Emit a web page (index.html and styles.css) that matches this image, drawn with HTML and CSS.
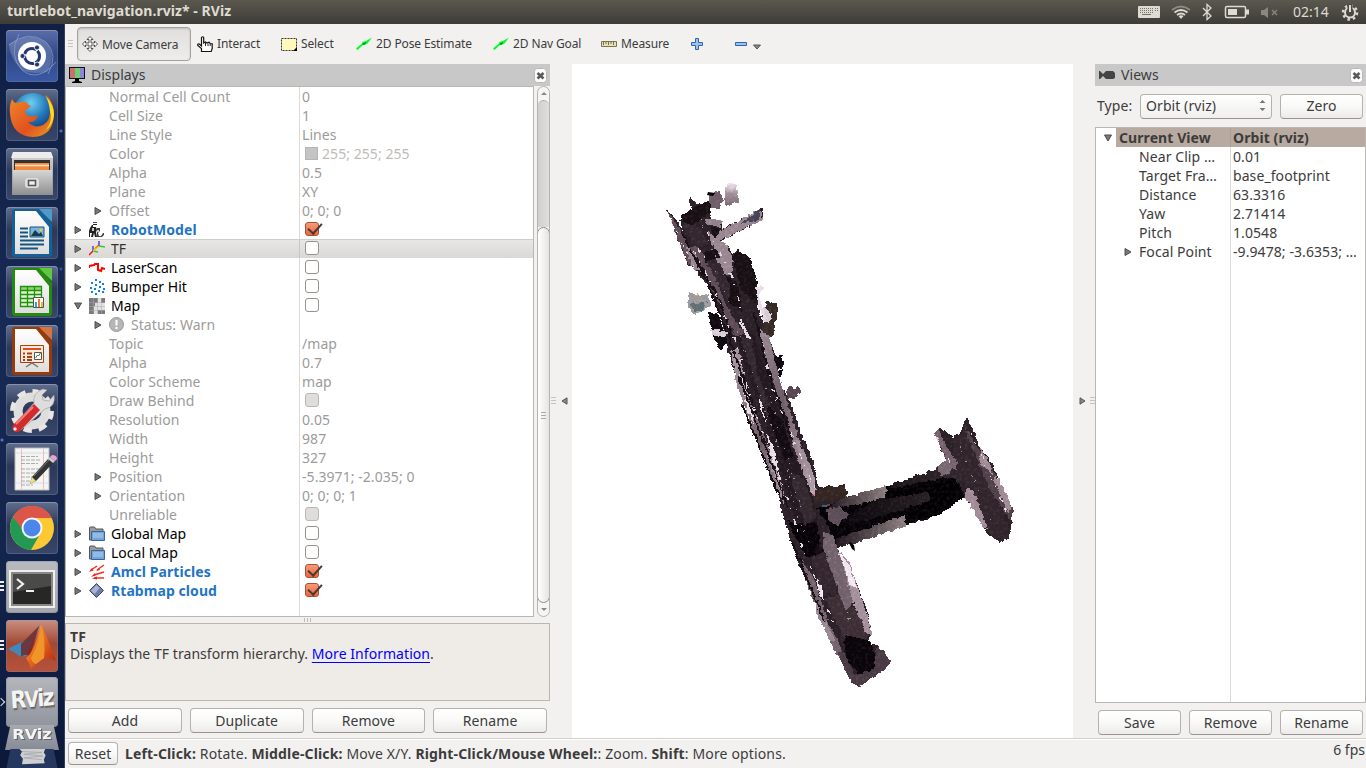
FILE: index.html
```html
<!DOCTYPE html>
<html lang="en">
<head>
<meta charset="utf-8">
<title>turtlebot_navigation.rviz* - RViz</title>
<link rel="stylesheet" href="styles.css">
</head>
<body>
<svg class="defs" width="0" height="0">
  <defs>
    <linearGradient id="sheet" x1="0" y1="0" x2="0" y2="1"><stop offset="0" stop-color="#fff"/><stop offset="1" stop-color="#ddd"/></linearGradient>
    <linearGradient id="steel" x1="0" y1="0" x2="0" y2="1"><stop offset="0" stop-color="#d6d6d6"/><stop offset="1" stop-color="#8f8f8f"/></linearGradient>
    <linearGradient id="fox" x1="0" y1="0" x2="1" y2="1"><stop offset="0" stop-color="#f08a28"/><stop offset=".6" stop-color="#e2511f"/><stop offset="1" stop-color="#e8a020"/></linearGradient>
    <radialGradient id="globe" cx=".45" cy=".25" r=".8"><stop offset="0" stop-color="#6fd0f2"/><stop offset=".5" stop-color="#2277b8"/><stop offset="1" stop-color="#0c2b66"/></radialGradient>
    <linearGradient id="flame" x1="0" y1="0" x2="1" y2="1"><stop offset="0" stop-color="#f6c048"/><stop offset=".5" stop-color="#e8641f"/><stop offset="1" stop-color="#a8200c"/></linearGradient>
    <symbol id="right" viewBox="0 0 8 8"><path d="M1 .5 7 4 1 7.5z" fill="#777" stroke="#4c4c4c"/></symbol>
    <symbol id="down" viewBox="0 0 8 8"><path d="M.5 1h7L4 7z" fill="#777" stroke="#4c4c4c"/></symbol>
    <symbol id="folder" viewBox="0 0 16 16"><path d="M.5 14V2q0-1 1-1h4l1.500 2h7v11z" fill="#9a9a9a" stroke="#555"/><path d="M2.500 5.500h13v9h-13z" fill="#76a4d6" stroke="#3465a4"/><path d="M4 7h10v5H4z" fill="#93bae3"/></symbol>
    <symbol id="arrow" viewBox="0 0 16 16"><path d="M0 12.500 6.500 7 6 6l4-1 6-3.500-4.500 6-3 1.500-1-.5L1.500 14z" fill="#0f2"/><path d="m6 8 4-2v1L8 9z" fill="#083"/></symbol>
    <symbol id="grip" viewBox="0 0 5 8"><path d="M0 .5h5M0 3.500h5M0 6.500h5" stroke="#c5c3c0"/></symbol>
    <symbol id="close" viewBox="0 0 13 15"><rect x=".5" y=".5" width="12" height="14" rx="3" fill="#fcfcfc" stroke="#b8b8b8"/><path d="m3.500 5 6 5.500m0-5.500-6 5.500" stroke="#5a5a57" stroke-width="2.700"/></symbol>
  </defs>
</svg>

<header class="topbar">
  <h1 class="title">turtlebot_navigation.rviz* - RViz</h1>
  <svg class="indicators" width="232" height="24" viewBox="1134 0 232 24">
    <rect x="1138" y="6" width="22" height="12" rx="1" fill="#dfdbd2"/>
    <path d="M1140 8.500h13M1140 10.500h13M1140 12.500h13M1155 8.500h4M1155 10.500h4" stroke="#77736a" stroke-dasharray="1 1"/><path d="M1142 14.500h9" stroke="#77736a"/>
    <g fill="none" stroke-width="1.800"><path d="M1172 10q9-7 18 0" stroke="#8e8a80"/><path d="M1174.500 12.500q6.500-5 13 0M1177 15q4-3 8 0" stroke="#dfdbd2"/></g><path d="m1178.500 16 2.500 3 2.500-3q-2.500-1.500-5 0z" fill="#dfdbd2"/>
    <path d="m1203 8 8 8-4 3.500v-15l4 3.500-8 8" fill="none" stroke="#dfdbd2" stroke-width="1.300"/>
    <rect x="1225.500" y="6.500" width="20" height="11" rx="1.500" fill="none" stroke="#dfdbd2" stroke-width="1.500"/><path d="M1228 9h9v6h-9zM1246 9.500h3v5h-3z" fill="#dfdbd2"/>
    <path d="M1261 10h3l4-3v11l-4-3h-3z" fill="#8b877e"/><path d="m1272 10 5 5m0-5-5 5" stroke="#8b877e" stroke-width="1.400"/>
    <g fill="none" stroke="#dfdbd2"><circle cx="1350" cy="12.500" r="5" stroke-width="2"/><circle cx="1350" cy="12.500" r="7" stroke-width="2.500" stroke-dasharray="2.500 3"/></g><path d="M1347.500 4h5v8h-5z" fill="#4b4942"/><path d="M1350 5v7" stroke="#dfdbd2" stroke-width="2"/>
  </svg>
  <span class="clock">02:14</span>
</header>

<div class="desktop">
<nav class="launcher">
  <div class="tile dash"><svg viewBox="0 0 52 52"><g fill="none" stroke="#8f9fce" stroke-opacity=".7"><path d="M3 15Q22-1 40 12q13 13 2 32"/><path d="M13 4Q2 25 16 40q16 13 34-8"/></g><path d="M3 14Q25 0 42 14 50 28 41 42 20 45 14 38 4 28 3 14z" fill="#9aa9d5" fill-opacity=".35"/><circle cx="26" cy="26" r="14" fill="#fff"/><circle cx="26" cy="26" r="7.500" fill="none" stroke="#24386f" stroke-width="3" stroke-dasharray="14.200 1.500" stroke-dashoffset="6"/><g fill="#24386f" stroke="#fff" stroke-width=".8"><circle cx="16.500" cy="26" r="2.500"/><circle cx="31" cy="17.500" r="2.500"/><circle cx="31" cy="34.500" r="2.500"/></g></svg></div>
  <div class="tile"><svg viewBox="0 0 52 52"><circle cx="27" cy="24" r="20" fill="url(#globe)"/><path d="M6 10q1 3 4 4 5-2 10-1 2 3 5 4l-6 5q0 3 4 5 5 1 9-1-2 8-10 7 7 7 15 3 8-4 7-17-1-9-4-14 8 9 8 19Q48 47 27 48 6 47 4 25q-1-8 2-15z" fill="url(#fox)"/><path d="M39 6q9 9 9 20-1 10-8 15 7-9 4-19-1-9-5-16z" fill="#ffd91f"/></svg></div>
  <div class="tile"><svg viewBox="0 0 52 52"><path d="M7 4h38l2 5v38H6V9z" fill="url(#steel)"/><path d="M7 4h38l2 6H5z" fill="#ececea"/><path d="M8 12h36v12H8z" fill="#333"/><path d="M9 15h34v9H9z" fill="#f08a3c"/><path d="M9 17.500h34" stroke="#fde3ca" stroke-width="1.500"/><path d="M7 22h39v25H7z" fill="url(#steel)"/><rect x="19" y="30" width="14" height="10" rx="3" fill="#ddd"/><path d="M22.500 32.500h7v5h-7z" fill="#eee" stroke="#555" stroke-width="1.500"/></svg></div>
  <div class="tile"><svg viewBox="0 0 52 52"><path d="M9 2h25l12 15v30q0 3-3 3H9q-3 0-3-3V5q0-3 3-3z" fill="#156094"/><path d="M9 4h21l13 16v27H9z" fill="url(#sheet)"/><path d="M33 2h13v13z" fill="#4a9ccf"/><g stroke="#145680" stroke-width="2"><path d="M14 21.500h8M14 25.500h8M14 29.500h8M14 33.500h24M14 37.500h24M14 41.500h18"/></g><path d="M24 20h14v10H24z" fill="#7cb5dc" stroke="#145680"/><path d="m25 29 4-6 4 4 2-2 2 4z" fill="#173b4b"/><circle cx="35" cy="23" r="1.500" fill="#f0c53a"/></svg></div>
  <div class="tile"><svg viewBox="0 0 52 52"><path d="M9 2h25l12 15v30q0 3-3 3H9q-3 0-3-3V5q0-3 3-3z" fill="#238a0d"/><path d="M9 4h21l13 16v27H9z" fill="url(#sheet)"/><path d="M33 2h13v13z" fill="#5ec83e"/><path d="M14.500 20.500h21v20h-21z" fill="#dcf6d1"/><path d="M14 20h22v4H14z" fill="#8bd770"/><path d="M14.500 20.500h21v20h-21zm0 4h21m-21 4h21m-21 4h21m-21 4h21m-14-16v20m7-20v20" fill="none" stroke="#25900d" stroke-width="1.300"/><path d="M27.500 31.500h10v10h-10z" fill="#fff" stroke="#555"/><path d="M29 36h2v5h-2z" fill="#28a6e8"/><path d="M32 33h2v8h-2z" fill="#f37b27"/><path d="M35 36h2v5h-2z" fill="#e5bd2c"/></svg></div>
  <div class="tile"><svg viewBox="0 0 52 52"><path d="M9 2h25l12 15v30q0 3-3 3H9q-3 0-3-3V5q0-3 3-3z" fill="#993a08"/><path d="M9 4h21l13 16v27H9z" fill="url(#sheet)"/><path d="M33 2h13v13z" fill="#d47440"/><path d="M14.500 20.500h23v17h-23z" fill="#fce8dd" stroke="#a4420d"/><path d="M17 24h18" stroke="#d6541a" stroke-width="2"/><path d="M17 28.500h2m2 0h5m-9 3.500h2m2 0h5m-9 3h2m2 0h5" stroke="#a4420d" stroke-width="2"/><path d="M28.500 27.500h7v7h-7z" fill="#fff" stroke="#555"/><path d="m29.500 33 2-3 1 1 2-3" stroke="#28912b" fill="none"/><path d="m20 42 6-4 6 4" fill="none" stroke="#777" stroke-width="1.500"/></svg></div>
  <div class="tile"><svg viewBox="0 0 52 52"><circle cx="26" cy="27" r="14" fill="none" stroke="#dededc" stroke-width="9"/><circle cx="26" cy="27" r="19.500" fill="none" stroke="#e6e6e4" stroke-width="5" stroke-dasharray="8.300 7"/><path d="M8 41 28 19q-2-10 9-14l4 1-5 5 1 5 6 1 5-6q2 12-9 14L15 46z" fill="#ddd" stroke="#999" stroke-width=".6"/><path d="M7 41 28 20l6 6-19 20q-4 4-7 1-3-3-1-6z" fill="#d22b2b"/><path d="m10 40 17-17" stroke="#f28181" stroke-width="2"/><circle cx="9" cy="45" r="1.700" fill="#eee"/></svg></div>
  <div class="tile"><svg viewBox="0 0 52 52"><path d="M9 5h34v42H9z" fill="#f4f4f2" stroke="#bbb"/><path d="M10 10h32M10 40h32" stroke="#cfe0f2"/><path d="M15.500 6v40M37.500 6v40" stroke="#f1bcbc"/><path d="M15 13.500h17M15 17h20M15 20.500h17M15 26h20M15 30h17M15 34h14M15 38h15M15 42h12" stroke="#999" stroke-width=".8" stroke-dasharray="4 1"/><path d="m24 41 2-7 16-18 5 4-17 18z" fill="#333"/><path d="m28 33 16-17" stroke="#777"/><path d="m24 41 2-7 4 4z" fill="#f3dd7a"/><path d="m42 16 2-2 5 4-2 2z" fill="#ccc"/><path d="m44 14 2-2q5 0 5 4l-2 2z" fill="#eaa0d0"/></svg></div>
  <div class="tile"><svg viewBox="0 0 52 52"><circle cx="26" cy="26" r="22" fill="#fcc934"/><path d="M7 15A22 22 0 0 1 46 16H26L17 30z" fill="#dc5549"/><path d="M7 15A22 22 0 0 0 25 48l9-16q-9 5-15-2z" fill="#249954"/><circle cx="26" cy="26" r="10.500" fill="#f5f5f5"/><circle cx="26" cy="26" r="8.500" fill="#4a86ec"/></svg></div>
  <div class="tile silver marked"><svg viewBox="0 0 52 52"><path d="M4 10h44v36H4z" fill="#888" stroke="#efefed" stroke-width="2"/><path d="M7 13h38v30H7z" fill="#272725"/><path d="M7 13h38v12L7 31z" fill="#4a4a48"/><path d="m11 18 6 5-6 5M20 30h8" fill="none" stroke="#f2f2f2" stroke-width="2.200"/></svg></div>
  <div class="tile matlab marked"><svg viewBox="0 0 52 52"><path d="M2 29q9-5 14-7 8-3 18-18L20 36l-5 1q-4-3-13-8z" fill="#3f87bc"/><path d="M15 24 33 6 24 36q-5-3-9 1z" fill="#7a1e18" fill-opacity=".75"/><path d="M35 4q8 17 15 37-7-5-12-2-8 4-13 10-2-7-5-11 8-5 15-34z" fill="url(#flame)"/><path d="M35 5q5 14 3 33l-8 6q-4-1-5-6 9-16 10-33z" fill="#f0952a"/></svg></div>
  <div class="tile silver rviz"><b class="logo">R<i>V</i>iz</b></div>
  <div class="fold"><b class="foldlogo">RViz</b></div>
  <div class="fold last"><svg viewBox="0 0 52 22"><path d="m12 2 29-1-2 5 2 3-2 5 1 4-25 1 1-6-3-4 2-4z" fill="#cfcfcf"/><path d="m15 5 22 1-20 2 21 2-21 2 20 2" fill="none" stroke="#a8abb3"/></svg></div>
</nav>

<main class="app">
  <div class="toolbar">
    <svg class="toolgrip" width="5" height="8"><use href="#grip"/></svg>
    <div class="tool active"><svg width="16" height="16" viewBox="0 0 16 16"><path d="m8 .5 3 3H9V7h3.500V5l3 3-3 3V9H9v3.500h2l-3 3-3-3h2V9H3.500v2l-3-3 3-3v2H7V3.500H5z" fill="#fff" stroke="#444" stroke-width=".9"/></svg><span>Move Camera</span></div>
    <div class="tool t1"><svg width="16" height="16" viewBox="0 0 16 16"><path d="M4.500 15.500v-3L.8 9.500q-.5-2 1.500-1.500L4.500 10V1.500q1.200-1.500 2.200 0V7l1.800-1 1.500 1 2-.7 1.200 1.200 2 .3v4.700l-1 3z" fill="#fff" stroke="#111" stroke-width="1.200"/><path d="M8.500 7v3M11 7.500V10M13.200 8v2" stroke="#222"/></svg><span>Interact</span></div>
    <div class="tool t2"><svg width="16" height="16" viewBox="0 0 16 16"><path d="M.5 2.500h15v12H.5z" fill="#fff8bd" stroke="#333" stroke-dasharray="2 1"/><path d="M16 11v4h-4z"/></svg><span>Select</span></div>
    <div class="tool t3"><svg width="16" height="16"><use href="#arrow"/></svg><span>2D Pose Estimate</span></div>
    <div class="tool t4"><svg width="16" height="16"><use href="#arrow"/></svg><span>2D Nav Goal</span></div>
    <div class="tool t5"><svg width="16" height="16" viewBox="0 0 16 16"><path d="M.5 5.500h15v5H.5z" fill="#ece1ae" stroke="#77705a"/><path d="M2.500 6v3M5 6v2M7.500 6v3M10 6v2M12.500 6v3" stroke="#77705a"/></svg><span>Measure</span></div>
    <svg class="plus" width="12" height="12" viewBox="0 0 12 12"><path d="M4.500.5h3v4h4v3h-4v4h-3v-4h-4v-3h4z" fill="#9fc2e8" stroke="#2f66a8"/></svg>
    <svg width="12" height="12" viewBox="0 0 12 12"><path d="M.5 4.500h11v3H.5z" fill="#9fc2e8" stroke="#2f66a8"/></svg>
    <svg class="menuarrow" width="8" height="6"><path d="M.5 1h7L4 5z" fill="#888" stroke="#555"/></svg>
  </div>

  <div class="work">
    <section class="displays">
      <h2 class="dockhead"><svg width="16" height="16" viewBox="0 0 16 16"><path d="M0 0h16v12H0z" fill="#111"/><path d="M1 1h5v10H1z" fill="#c77172"/><path d="M6 1h5v10H6z" fill="#6dcf72"/><path d="M11 1h4v10h-4z" fill="#8c86da"/><path d="M6 12h4v2l3 1v1H3v-1l3-1z"/></svg><span>Displays</span><svg class="x" width="13" height="15"><use href="#close"/></svg></h2>
      <div class="treewrap">
        <div class="tree">
          <div class="row sub"><span class="name">Normal Cell Count</span><span>0</span></div>
          <div class="row sub"><span class="name">Cell Size</span><span>1</span></div>
          <div class="row sub"><span class="name">Line Style</span><span>Lines</span></div>
          <div class="row sub"><span class="name">Color</span><span class="rgb"><i></i>255; 255; 255</span></div>
          <div class="row sub"><span class="name">Alpha</span><span>0.5</span></div>
          <div class="row sub"><span class="name">Plane</span><span>XY</span></div>
          <div class="row sub open"><span class="name"><svg width="8" height="8"><use href="#right"/></svg>Offset</span><span>0; 0; 0</span></div>
          <div class="row on"><span class="name"><svg width="8" height="8"><use href="#right"/></svg><svg class="ico" width="16" height="16" viewBox="0 0 16 16"><path d="M4 0h4v1H4z" fill="#33498c"/><path d="M4 2h4v1H4zM1 6l2-3h1v2h3l1 3-1 2 1 5H6l-1-4-1 4H2l1-4H1v4H0V9z" fill="#222"/><path d="M8 6h3v3l-2 2 1 3h2l2-3h1v2l-2 2H8z" fill="#444"/><path d="M3 6h2v3H3zM8 8h2v2H8z" fill="#ccc"/></svg><b>RobotModel</b></span><i class="check yes"></i></div>
          <div class="row sel"><span class="name"><svg width="8" height="8"><use href="#right"/></svg><svg class="ico" width="16" height="16" viewBox="0 0 16 16"><g fill="none" stroke-width="1.400"><path d="m0 14 4-4M6 8l4-4" stroke="#e11"/><path d="M4 10V5M10 5V0" stroke="#53c"/><path d="m4 10 5 1M10 5l6 1" stroke="#3c2"/><path d="m4 10 6-5" stroke="#ec0"/></g></svg>TF</span><i class="check"></i></div>
          <div class="row"><span class="name"><svg width="8" height="8"><use href="#right"/></svg><svg class="ico" width="16" height="16" viewBox="0 0 16 16"><path d="M0 8V6l5-1 1-1h3v6l3 1 1-3 3 1" fill="none" stroke="red" stroke-width="2"/></svg>LaserScan</span><i class="check"></i></div>
          <div class="row"><span class="name"><svg width="8" height="8"><use href="#right"/></svg><svg class="ico" width="16" height="16" viewBox="0 0 16 16"><path d="M6 0h2v2H6zM2 3h2v2H2zM10 2h2v2h-2zM13 4h2v2h-2zM6 5h2v2H6zM1 8h2v2H1zM10 7h2v2h-2zM14 9h2v2h-2zM5 9h2v2H5zM2 12h2v2H2zM9 11h2v2H9zM13 12h2v2h-2zM6 14h2v2H6z" fill="#0a82f0"/></svg>Bumper Hit</span><i class="check"></i></div>
          <div class="row"><span class="name"><svg width="8" height="8"><use href="#down"/></svg><svg class="ico" width="16" height="16" viewBox="0 0 16 16"><path d="M0 0h16v16H0z" fill="#e2e2e2"/><path d="M0 0h9v5H6v3H5v8H0zM12 0h4v5h-4zM9 12h7v4H9z" fill="#7b7b7b"/><path d="M4.500 0v16M8.500 0v16M12.500 0v16M0 4.500h16M0 8.500h16M0 12.500h16" stroke="#aaa" stroke-width=".5"/></svg>Map</span><i class="check"></i></div>
          <div class="row sub open"><span class="name"><svg width="8" height="8"><use href="#right"/></svg><svg class="warn" width="16" height="16" viewBox="0 0 16 16"><circle cx="7.500" cy="7.500" r="7" fill="#b6b6b6" stroke="#999"/><path d="M6.500 3h2v5.500h-2zM6.500 10h2v2h-2z" fill="#fff"/></svg>Status: Warn</span></div>
          <div class="row sub"><span class="name">Topic</span><span>/map</span></div>
          <div class="row sub"><span class="name">Alpha</span><span>0.7</span></div>
          <div class="row sub"><span class="name">Color Scheme</span><span>map</span></div>
          <div class="row sub"><span class="name">Draw Behind</span><i class="check off"></i></div>
          <div class="row sub"><span class="name">Resolution</span><span>0.05</span></div>
          <div class="row sub"><span class="name">Width</span><span>987</span></div>
          <div class="row sub"><span class="name">Height</span><span>327</span></div>
          <div class="row sub open"><span class="name"><svg width="8" height="8"><use href="#right"/></svg>Position</span><span>-5.3971; -2.035; 0</span></div>
          <div class="row sub open"><span class="name"><svg width="8" height="8"><use href="#right"/></svg>Orientation</span><span>0; 0; 0; 1</span></div>
          <div class="row sub"><span class="name">Unreliable</span><i class="check off"></i></div>
          <div class="row"><span class="name"><svg width="8" height="8"><use href="#right"/></svg><svg class="ico" width="16" height="16"><use href="#folder"/></svg>Global Map</span><i class="check"></i></div>
          <div class="row"><span class="name"><svg width="8" height="8"><use href="#right"/></svg><svg class="ico" width="16" height="16"><use href="#folder"/></svg>Local Map</span><i class="check"></i></div>
          <div class="row on"><span class="name"><svg width="8" height="8"><use href="#right"/></svg><svg class="ico" width="16" height="16" viewBox="0 0 16 16"><path d="m2 6 6-4M8 6l7-5M5 11l10-3M5 14h10" stroke="#f03020" stroke-width="1.400"/><path d="m0 8 3-4 1.500 2.500zM7 7l3-3 1 2zM2 13l4-4 .5 2.500zM3 14.500l5-2v3z" fill="#e22"/></svg><b>Amcl Particles</b></span><i class="check yes"></i></div>
          <div class="row on"><span class="name"><svg width="8" height="8"><use href="#right"/></svg><svg class="ico" width="16" height="16" viewBox="0 0 16 16"><path d="m7.500.5 7 7-7 7-7-7z" fill="#6d7dab" stroke="#3c486c"/><path d="m7.500 2 3 3-5 6L2 7.500z" fill="#a9b4d2"/></svg><b>Rtabmap cloud</b></span><i class="check yes"></i></div>
        </div>
        <div class="scroll"><i class="cap up"></i><i class="trough"></i><i class="thumb"></i><i class="cap dn"></i></div>
      </div>
      <svg class="hgrip" width="8" height="6"><path d="M.5 1v4M3.500 1v4M6.500 1v4" stroke="#bbb"/></svg>
      <div class="help"><b>TF</b><p>Displays the TF transform hierarchy. <a>More Information</a>.</p></div>
      <div class="buttons"><span class="btn">Add</span><span class="btn">Duplicate</span><span class="btn">Remove</span><span class="btn">Rename</span></div>
    </section>

    <div class="split"><svg width="5" height="8"><use href="#grip"/></svg><svg width="7" height="8"><path d="M6 .8v6.400L1 4z" fill="#888" stroke="#555"/></svg></div>

    <svg class="cloud" width="501" height="674" viewBox="572 64 501 674">
      <defs>
        <filter id="scan" x="572" y="64" width="501" height="674" filterUnits="userSpaceOnUse" color-interpolation-filters="sRGB">
          <feTurbulence type="fractalNoise" baseFrequency=".22" numOctaves="2" seed="4" result="n"/>
          <feDisplacementMap in="SourceGraphic" in2="n" scale="5" xChannelSelector="R" yChannelSelector="G" result="d"/>
          <feTurbulence type="fractalNoise" baseFrequency=".32" numOctaves="2" seed="9" result="g"/>
          <feColorMatrix in="g" values=".3 0 0 0 -.14 .28 0 0 0 -.14 .29 0 0 0 -.13 0 0 0 0 1" result="gg"/>
          <feComposite in="d" in2="gg" operator="arithmetic" k2="1" k3=".7" result="m"/>
          <feComposite in="m" in2="d" operator="in"/>
        </filter>
        <linearGradient id="wall" x1="0" y1="0" x2="1" y2="1"><stop offset="0" stop-color="#b5a3ad"/><stop offset=".5" stop-color="#6b5c63"/><stop offset="1" stop-color="#b9a6b1"/></linearGradient>
        <linearGradient id="glow" x1="0" x2="1"><stop offset="0" stop-color="#1c1518"/><stop offset="1" stop-color="#8b7f7f"/></linearGradient>
        <linearGradient id="arm" x1="0" x2="1"><stop offset="0" stop-color="#0a070a"/><stop offset="1" stop-color="#302729"/></linearGradient>
        <linearGradient id="fin" x1="0" y1="0" x2="0" y2="1"><stop offset="0" stop-color="#f0e4ee"/><stop offset=".5" stop-color="#9b8a93"/><stop offset="1" stop-color="#76656c"/></linearGradient>
      </defs>
      <g filter="url(#scan)" shape-rendering="crispEdges">
        <path fill="#2a2025" d="M667 210 675 218 683 232 680 220 693 212 688 199 691 197 697 204 710 201 710 219 722 221 722 230 763 207 763 220 717 243 727 245 732 253 738 250 750 258 758 283 758 310 767 333 777 358 780 385 790 400 800 430 815 467 818 487 846 485 847 497 887 487 933 470 947 462 934 433 940 427 953 437 960 432 967 417 980 447 990 460 1013 510 1010 537 1000 543 987 533 965 497 958 495 947 507 933 517 905 525 837 548 853 573 867 610 872 633 867 642 877 645 888 657 890 663 873 678 858 687 850 680 837 653 820 613 800 567 787 530 780 503 767 463 750 420 740 393 728 350 720 313 710 290 695 270 687 263 676 234z"/>
        <path fill="#5d4c54" d="m667 210 7 9 21 39 2 12-10-8zM688 248l9-2 18 25 11 35 23 35 18 58-8-4-20-52-31-61z"/>
        <path fill="#98868f" d="m686 247 9 5 7 19-8 0zM708 231l8 8 10 5 7 15-2 17-9-3zM714 235l47-27 2 12-50 24z"/>
        <path fill="url(#fin)" d="m725 189 4-6 8 2 2 17-14 5z"/>
        <path fill="#454457" d="m742 223 19-15-2 12-20 4z"/>
        <path fill="#918189" d="m704 219 18 1-1 8-13-4z"/><path fill="#6d5d66" d="m709 195 10-4 4 9-4 9-10-2z"/>
        <path fill="#171012" d="m695 206 15-5 1 11-17 12 5 24-14-18-4-14 10-6zM710 227l11 1-6 11zM704 254l12-6 4 8-15 7zM738 250l12 8 8 25-1 20-15-12-10-33zM725 275l13 8 4 28-14-9z"/>
        <path fill="#33272d" d="m683 222 17 6 8 16-11 4-14-20zM706 262l14 2 10 22-2 16z"/>
        <path fill="#342a25" d="m767 301 11 3-1 15-8 6-8-9zM762 323l12-1 1 14-13 1z"/><path fill="#0f0b0e" d="m708 311 11 5 8 25-5 9-7-7-5-20zM771 358l11-2 1 12-11-1zM766 371l17-2-1 7-15 5z"/>
        <path fill="#9a9a9d" d="m688 292 12 4 9-3 1 14-15 8-7-9z"/>
        <path fill="#61706f" d="m690 304 15-2-1 8-9 3z"/>
        <path fill="#d5cbd3" d="m763 307 9 6-3 10-7-3zM711 330l16 1-4 7-10-3z"/>
        <path fill="url(#wall)" d="m731 350 7-3 10 47 19 49 15 49 2 12-12-24-18-48-18-50zM757 327l12 9 12 48 18 54 16 40 1 19-8-7-27-83z"/>
        <path fill="#23191e" d="m735 336 19-2 12 36 24 75 22 47 8 46-20-4-19-62-22-66z"/>
        <path fill="#33282d" d="m741 338 11-1 6 38 17 42-8-2-11-28zM790 473l14 5 12 39-11 9z"/>
        <path fill="#120c10" d="m766 404 17 17 10 36-8 3-11-25z"/>
        <path fill="#e6dce4" d="m739 370 6 18 5 15 4 22-7-17zM766 432l7 13 7 30-7-12zM762 286l2 2-5 8 9 27-8-11-5-25zM740 319l9 14 1 7-7-9-4-10zM758 397l3 4 5 20-4-7z"/>
        <path fill="#a08f98" d="M770 452l12 34 4 14-9-14-10-31zM798 440l9 18 6 21-7-9-12-30z"/>
        <path fill="#57464f" d="m787 389 5-5 1 4 6-1 2 6-7 6-7-1z"/>
        <path fill="#33251f" d="m815 490 31-6v13l-32 7z"/>
        <path fill="#050305" d="m817 508 70-19 47-14 22 4 9 16-23 19-39 11-68 20-7-19z"/>
        <path fill="url(#glow)" d="m841 499 45-13 1 11-34 9-26 3z"/>
        <path fill="url(#arm)" d="m842 521 35-22 41-9 22 3-8 14-34 4-48 14zM890 485l44-15 6 3 14 3-69 14z"/>
        <path fill="#020102" d="m886 486 5 0-2 7 26-5 42-9 3 12-14 16-14 8-27 8v-14l25-8-2-9-43 7z"/>
        <path fill="url(#glow)" d="m836 538 38-12 31-11v12l-70 22z"/>
        <path fill="#5c4e56" d="m827 509 13-2 9 8-12 10-8-4z"/><path fill="#78686f" d="m936 467 11-7 9 1-1 11-14 4z"/>
        <path fill="#31252a" d="m953 437 13-4 19 33 21 56 4 14-10 6-12-10-16-44-25-12 9-12z"/>
        <path fill="#746169" d="m934 433 5-4 8 18 11 16-3 8-8-10z"/><path fill="#4f4146" d="m965 426 13 23 12 16 23 44-2 13-20-31-24-55z"/>
        <path fill="#9f8a94" d="m966 489 7 1 15 39-5-1-17-30zM980 447l10 16 2 13-12-14zM996 475l13 23 2 11-3 3-14-31z"/>
        <path fill="#060206" d="m787 520 18 5 12-4 4 34-15 2z"/><path fill="#140d12" d="m817 545 15 10 3 40-12-13-8-22z"/>
        <path fill="#33262c" d="m811 558 16-8 12 18-4 27-14-1z"/><path fill="#3c2e33" d="m824 597 19-1 17 20 9 23-24 1z"/>
        <path fill="#71626a" d="m801 559 14 21 4 15 11 31 14 28-1 7-7-6-17-40-11-27zM823 532l9 2 14 38 8 29-9 9-20-57z"/>
        <path fill="#a28f99" d="m838 550 12 13 18 54 4 18-5-1-15-34-6-24z"/><path fill="#efe5ee" d="m839 552 11 14 7 22-7-3zM815 576l7 12 3 12-5-4z"/><path fill="#978791" d="m815 598 6 12 14 30-5 1-14-28z"/>
        <path fill="#0a0509" d="m846 635 24 6 10 28-19 6-13-12-4-18z"/>
        <path fill="#483a43" d="m837 652 7-1 10 24 19-5 4-24 12 11 1 8-16 12-15 10-9-6z"/>
        <path fill="none" stroke="#150f12" stroke-width="2" d="m682 233 27 53 21 55 26 74M739 377l30 79 19 52M754 313l16 66 22 61M791 540l34 82M697 258l24 46 11 34M775 391l14 35M742 404l36 90"/>
        <path fill="none" stroke="#e3d7df" stroke-width="1.300" stroke-dasharray="5 6 2 11" d="m671 221 22 44M694 250l18 35 24 57 18 68 34 90 14 46 34 84M707 232l22 35 12 41M762 341l10 48 24 57 19 42M936 438l15 26M971 432l36 81M697 249l8 5-3 10"/>
        <path fill="none" stroke="#9c8993" stroke-dasharray="1 5 1 9" d="m744 350 34 95 29 79M960 446l36 87M828 551l24 76M700 220l18 42M765 381l31 104M785 480l20 57 16 25M716 270l30 82"/>
      </g>
      <path d="m708 192 7 1-2 3-6-1zM850 542l4 3 1 6-3-2-3-6z"/>
      <path d="M822 506h5" stroke="#4db7dc"/><path d="M812 495h3M827 505h3" stroke="#d65863"/><path d="m692 293 4 4m1-4 5 7" stroke="#c29b65"/><path d="m700 308 4 1m2-8 2 2" stroke="#3f779b"/>
    </svg>

    <div class="split right"><svg width="7" height="8"><path d="M1 .8v6.400L6 4z" fill="#888" stroke="#555"/></svg><svg width="5" height="8"><use href="#grip"/></svg></div>

    <section class="views">
      <h2 class="dockhead"><svg width="16" height="16" viewBox="0 0 16 16"><path d="M0 4h1l3 3 3-3h7l2 2v5l-2 1H7L4 9l-3 3H0z" fill="#444"/></svg><span>Views</span><svg class="x" width="13" height="15"><use href="#close"/></svg></h2>
      <div class="typerow"><span class="label">Type:</span><span class="combo">Orbit (rviz)<svg width="7" height="13"><path d="M.5 4h6l-3-3zM.5 9h6l-3 3z" fill="#777"/></svg></span><span class="btn">Zero</span></div>
      <div class="tree">
        <div class="row head"><svg width="8" height="8"><use href="#down"/></svg><b class="name">Current View</b><b class="val">Orbit (rviz)</b></div>
        <div class="row"><span class="name">Near Clip …</span><span>0.01</span></div>
        <div class="row"><span class="name">Target Fra…</span><span>base_footprint</span></div>
        <div class="row"><span class="name">Distance</span><span>63.3316</span></div>
        <div class="row"><span class="name">Yaw</span><span>2.71414</span></div>
        <div class="row"><span class="name">Pitch</span><span>1.0548</span></div>
        <div class="row more"><span class="name"><svg width="8" height="8"><use href="#right"/></svg>Focal Point</span><span>-9.9478; -3.6353; …</span></div>
      </div>
      <div class="buttons"><span class="btn">Save</span><span class="btn">Remove</span><span class="btn">Rename</span></div>
    </section>
  </div>

  <footer class="status"><span class="btn">Reset</span><p><b>Left-Click:</b> Rotate. <b>Middle-Click:</b> Move X/Y. <b>Right-Click/Mouse Wheel:</b>: Zoom. <b>Shift</b>: More options.</p><span class="fps">6 fps</span></footer>
</main>
</div>
</body>
</html>
```
FILE: styles.css
```css
* { box-sizing: border-box; }
body { margin: 0; width: 1366px; height: 768px; overflow: hidden; background: #f2f1f0; color: #3c3c3c; font: 14px/19px "Noto Sans", "Open Sans", sans-serif; white-space: nowrap; }
svg { display: block; flex: none; }
.defs { position: absolute; }
h1, h2, p { margin: 0; font: inherit; }
i { font-style: normal; }

.topbar { height: 24px; display: flex; align-items: center; background: linear-gradient(#5b584f, #3d3c37); color: #dfdbd2; padding-left: 7px; }
.title { flex: 1; font-weight: 700; font-size: 14px; line-height: 22px; padding-bottom: 2px; letter-spacing: .05px; }
.clock { width: 38px; margin-left: -73px; margin-right: 35px; padding-bottom: 1px; }

.desktop { display: flex; height: 744px; }
.launcher { width: 65px; padding: 6px 0 0 6px; background: radial-gradient(circle at 61px 107px, #4572b2 0 1px, transparent 2px), radial-gradient(circle at 61px 245px, #2f568f 0 1px, transparent 2px), radial-gradient(circle at 60px 292px, #2f568f 0 1px, transparent 2px), radial-gradient(circle at 2px 416px, #5577b0 0 1px, transparent 2px), linear-gradient(#101f43, #172a55 40%, #14254d 70%, #0b1838); border-right: 1px solid #33405f; display: flex; flex-direction: column; gap: 7px; overflow: hidden; }
.tile { width: 52px; height: 52px; flex: none; position: relative; border-radius: 4px; background: linear-gradient(#606d8c, #2b3858 45%, #38466a); box-shadow: inset 0 0 0 1px #7581a066, inset 0 1px #b5bdcf99; }
.tile svg { width: 52px; height: 52px; }
.dash { background: linear-gradient(#5a6dab, #304885 50%, #3b5aa5); }
.silver { background: linear-gradient(#b9babd, #a5a7ac); }
.matlab { background: linear-gradient(#cc8e7f, #a04a36 45%, #b7523a); }
.marked::before { content: ""; position: absolute; left: -6px; top: 20px; width: 4px; height: 11px; background: repeating-linear-gradient(#eee 0 2px, transparent 2px 4px); }
.rviz { margin-top: -2px; height: 50px; color: #f4f4f4; text-shadow: 1px 2px 1px #666; background: linear-gradient(#b4b6ba, #90949d); }
.rviz::before { content: ""; position: absolute; left: -8px; top: 22px; width: 5px; height: 5px; border: solid #ddd; border-width: 1px 1px 0 0; transform: rotate(45deg); }
.logo { display: block; padding: 12px 0 0 5px; font: 700 24px/25px "DejaVu Sans", sans-serif; letter-spacing: -2px; transform: scaleX(.85) rotate(-4deg); transform-origin: left; }
.logo i { font-size: 22px; }
.fold { width: 54px; height: 25px; margin: -9px 0 0 -1px; flex: none; background: linear-gradient(#a7a9ae, #858a96); clip-path: polygon(10% 0, 90% 0, 100% 100%, 0 100%); text-align: center; color: #f5f5f5; }
.foldlogo { display: block; font: 700 14px/18px "DejaVu Sans", sans-serif; transform: scaleX(1.150); text-shadow: 1px 1px #666; }
.fold.last { background: #25375f; height: 26px; margin-top: -8px; }
.fold.last svg { width: 54px; height: 20px; margin-top: -2px; }

.app { width: 1301px; display: flex; flex-direction: column; background: #f2f1f0; }
.toolbar { height: 40px; padding-left: 3px; display: flex; align-items: center; font-size: 12px; letter-spacing: -.12px; }
.tool span { margin-top: -2px; }
.toolgrip { margin-right: 4px; }
.tool { display: flex; align-items: center; gap: 4px; flex: none; }
.tool.active { width: 114px; height: 34px; margin-right: 6px; padding-left: 4px; border: 1px solid #a5a29e; border-radius: 4px; background: linear-gradient(#e0dfde, #eeedeb); box-shadow: inset 0 1px 2px #bbb; }
.tool.active span { margin-top: 0; }
.t1 { width: 84px; } .t2 { width: 75px; } .t3 { width: 137px; } .t4 { width: 108px; } .t5 { width: 90px; }
.plus { margin-right: 32px; }
.menuarrow { margin: 6px 0 0 6px; }

.work { height: 674px; display: flex; }
.displays { width: 485px; display: flex; flex-direction: column; }
.dockhead { height: 22px; flex: none; display: flex; align-items: center; gap: 6px; padding: 0 3px 0 4px; background: #c8c8c8; }
.dockhead span { margin-top: -2px; }
.dockhead .x { margin-left: auto; }
.treewrap { height: 531px; display: flex; gap: 3px; }
.tree { border: 1px solid #bab7b2; background: #fff; }
.displays .tree { width: 469px; background: linear-gradient(#dadada, #dadada) 233px 0 / 1px 100% no-repeat #fff; color: #000; }
.row { display: flex; height: 19px; align-items: center; line-height: 19px; }
.row .name { display: flex; align-items: center; }
.displays .name { width: 236px; padding-left: 8px; }
.ico { margin: 0 6px 0 7px; }
.sub { color: #9c9b9a; letter-spacing: .06px; }
.sub .name { padding-left: 43px; }
.open .name { padding-left: 28px; gap: 7px; }
.warn { margin-right: -1px; }
.on b { color: #1f74c4; letter-spacing: .07px; }
.sel { background: linear-gradient(90deg, transparent 233px, #c9c7c5 233px 234px, transparent 234px), linear-gradient(#e9e8e7, #dad8d5); box-shadow: inset 0 1px #d0cecb; color: #333; }
.rgb { color: #bdbcbb; display: flex; align-items: center; }
.rgb i { width: 13px; height: 13px; margin: 0 4px 0 3px; background: #c4c4c4; border: 1px solid #b5b5b5; }
.check { width: 14px; height: 14px; margin-left: 3px; margin-top: -1px; border: 1px solid #96938e; border-radius: 3px; background: #fff; }
.check.off { background: #dfdddb; border-color: #bcb8b3; }
.check.yes { position: relative; background: linear-gradient(#f79a78, #e9683f); border-color: #a75132; }
.check.yes::after { content: ""; position: absolute; left: 5px; top: -3px; width: 6px; height: 12px; border: solid #4a3832; border-width: 0 2px 2px 0; transform: rotate(42deg); }

.scroll { width: 13px; display: flex; flex-direction: column; border: 1px solid #b7b4b0; border-radius: 7px; overflow: hidden; background: #f6f5f4; }
.cap { height: 13px; flex: none; display: grid; place-items: center; }
.cap::after { content: ""; border: 3px solid transparent; }
.up::after { border-bottom: 3px solid #888; border-top: 0; }
.dn::after { border-top: 3px solid #888; border-bottom: 0; }
.trough { height: 127px; background: linear-gradient(90deg, #d2d0ce, #dfdedc); border-radius: 7px 7px 0 0; border-top: 1px solid #aaa; }
.thumb { flex: 1; border: 1px solid #8f8c87; margin: 0 -1px; border-radius: 7px; background: linear-gradient(90deg, #fff, #e6e4e2) ; display: grid; place-items: center; }
.thumb::after { content: ""; width: 5px; height: 7px; background: repeating-linear-gradient(#aaa 0 1px, transparent 1px 3px); }
.hgrip { margin-left: 239px; }
.help { height: 78px; padding: 4px 4px; border: 1px solid #bbb7b0; background: #efebe7; line-height: 17px; letter-spacing: .05px; }
.help a { color: #00f; text-decoration: underline; text-underline-offset: 3px; }
.buttons { display: flex; gap: 8px; padding: 7px 3px 0; }
.btn { flex: 1; height: 25px; display: flex; align-items: center; justify-content: center; padding-bottom: 1px; letter-spacing: .08px; border: 1px solid #b5b2ad; border-bottom-color: #98958f; border-radius: 4px; background: linear-gradient(#fff, #f9f9f8 50%, #ecebe9); }

.split { width: 22px; display: flex; align-items: center; gap: 5px; padding-left: 1px; }
.split.right { padding-left: 6px; gap: 4px; }
.cloud { background: #fff; }

.views { width: 271px; display: flex; flex-direction: column; letter-spacing: .08px; }
.typerow { display: flex; height: 41px; padding: 0 3px 1px 2px; align-items: center; }
.label { width: 43px; margin-top: -1px; }
.combo { width: 132px; height: 25px; display: flex; align-items: center; justify-content: space-between; padding: 0 5px 1px; margin-right: 8px; border: 1px solid #b5b2ad; border-bottom-color: #98958f; border-radius: 4px; background: linear-gradient(#fff, #f0efed); }
.views .tree { height: 576px; background: linear-gradient(#dadada, #dadada) 134px 0 / 1px 100% no-repeat #fff; }
.views .row .name { width: 137px; padding-left: 43px; flex: none; }
.views .head { background: linear-gradient(90deg, #fff 20px, #b8aaa0 20px 134px, #aa9d94 134px 135px, #b8aaa0 135px); padding-left: 8px; }
.views .row.head .name { width: 121px; padding-left: 7px; }
.views .row.more .name { padding-left: 28px; gap: 7px; }

.status { height: 30px; border-top: 1px solid #d3d0cc; box-shadow: inset 0 1px #fff; display: flex; align-items: center; padding: 0 1px 0 3px; }
.status p { letter-spacing: .15px; }
.status .btn { flex: none; width: 50px; height: 23px; margin-right: 7px; }
.fps { margin-left: auto; margin-top: -8px; }
```
